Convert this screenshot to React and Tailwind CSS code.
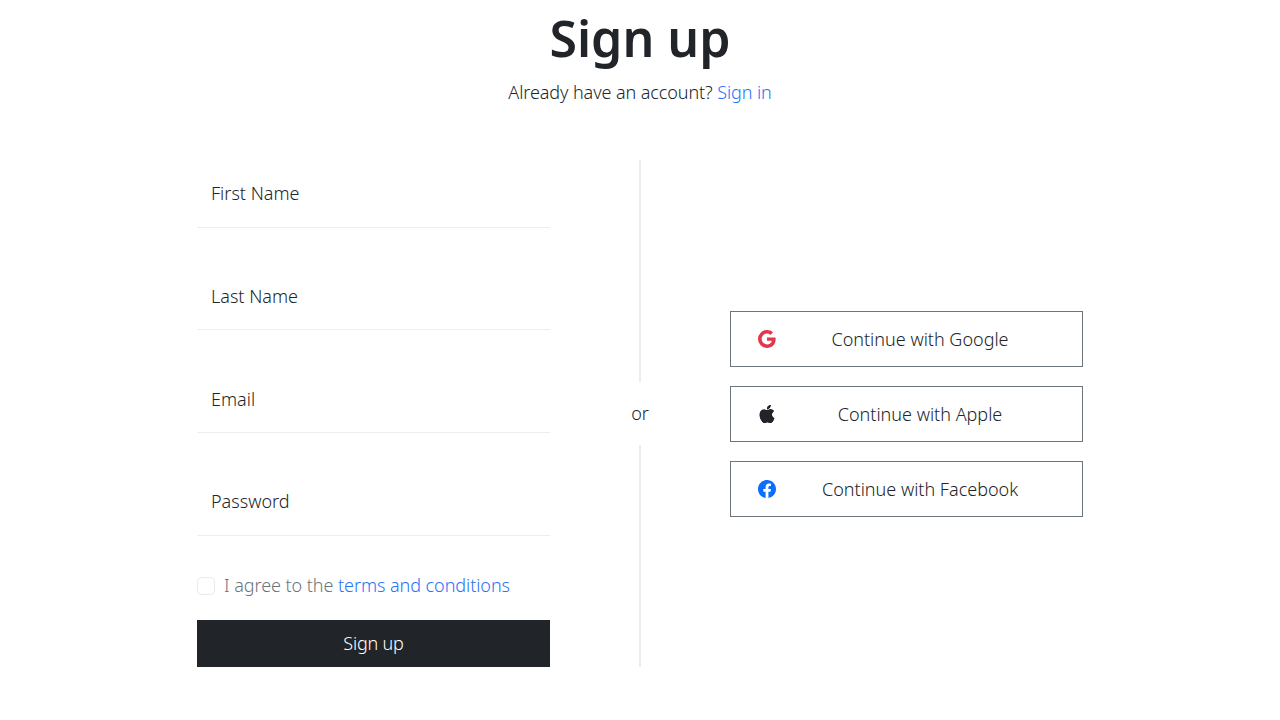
import { BsGoogle, BsApple, BsFacebook } from "react-icons/bs";

function Field({ placeholder, type = "text" }) {
  return (
    <input
      type={type}
      placeholder={placeholder}
      className="h-[67.5px] w-full border-b border-[#eceef0] pl-[14px] pt-[1.5px] pb-[2px] text-[18px] font-light outline-none placeholder:text-[#212529]"
    />
  );
}

function Social({ icon, label }) {
  return (
    <button className="flex h-[56px] w-full items-center border border-[#6c757d] pl-[27px] pr-[18px] text-[18px] font-light text-[#212529]">
      {icon}
      <span className="flex-1 pt-[1px] text-center">{label}</span>
    </button>
  );
}

export default function App() {
  return (
    <div className="flex h-[720px] flex-col items-center overflow-hidden bg-white font-['Noto_Sans',sans-serif] text-[#212529]">
      <h1 className="mt-[8px] text-[50px] leading-[60px] font-semibold">Sign up</h1>
      <p className="mt-[11px] text-[18px] leading-[27px] font-light tracking-[-0.09px]">
        Already have an account? <a className="text-[#2a72f8]">Sign in</a>
      </p>
      <div className="mt-[54px] flex h-[507px] w-[886px]">
        <form className="flex w-[353px] flex-col">
          <div className="flex flex-col gap-[35.25px]">
            <Field placeholder="First Name" />
            <Field placeholder="Last Name" />
            <Field placeholder="Email" type="email" />
            <Field placeholder="Password" type="password" />
          </div>
          <label className="mt-[41px] flex h-[18px] items-center gap-[9px] text-[18px] font-light text-[#6c757d]">
            <span className="h-[18px] w-[18px] shrink-0 rounded-[4px] border border-[#e9ecef]" />
            <span className="tracking-[-0.06px]">
              I agree to the <a className="text-[#2a72f8]">terms and conditions</a>
            </span>
          </label>
          <button className="mt-[25px] h-[47px] w-full bg-[#212529] text-[18px] font-light tracking-[-0.2px] text-white">Sign up</button>
        </form>
        <div className="flex w-[180px] flex-col items-center">
          <div className="w-[2px] flex-1 bg-[#ecedef]" />
          <span className="py-[18px] text-[18px] leading-[27px] font-light">or</span>
          <div className="w-[2px] flex-1 bg-[#ecedef]" />
        </div>
        <div className="flex w-[353px] flex-col justify-center gap-[19px]">
          <Social icon={<BsGoogle className="size-[18px] text-[#e4364a]" />} label="Continue with Google" />
          <Social icon={<BsApple className="size-[18px] text-[#212529]" />} label="Continue with Apple" />
          <Social icon={<BsFacebook className="size-[18px] text-[#0d6efd]" />} label="Continue with Facebook" />
        </div>
      </div>
    </div>
  );
}
